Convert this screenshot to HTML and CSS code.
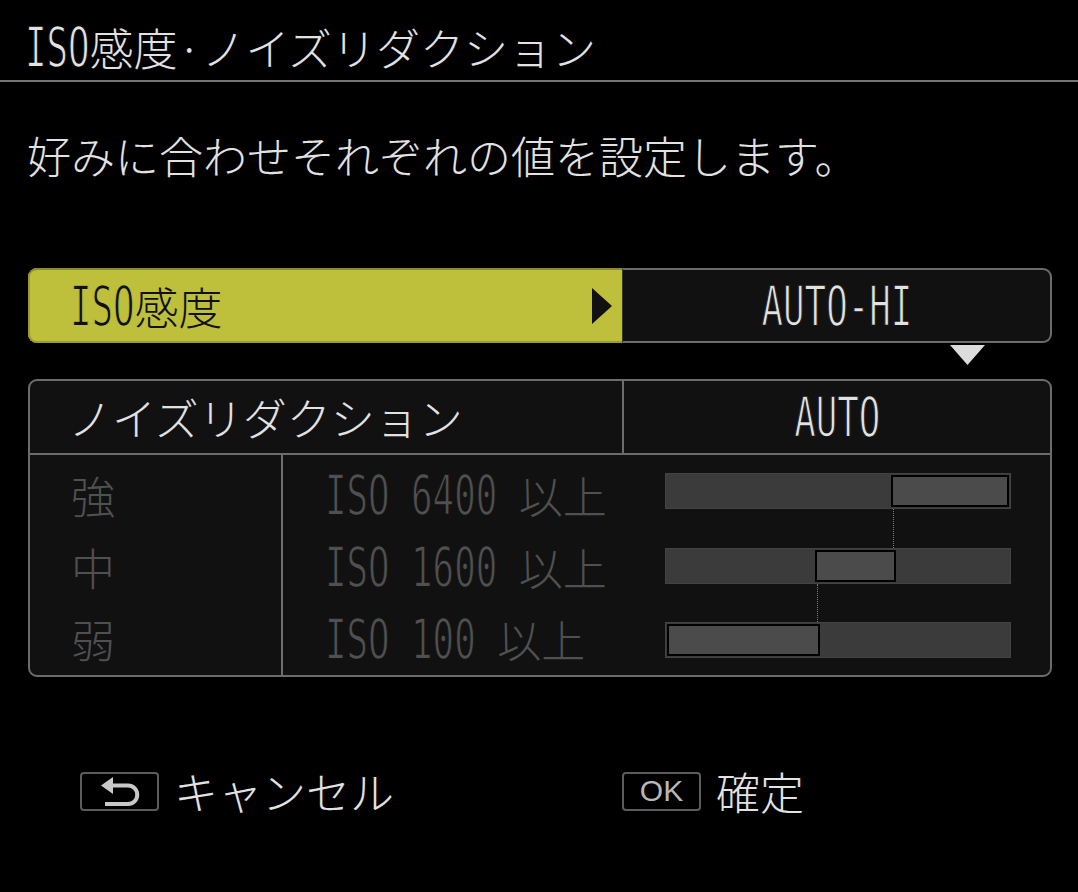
FILE: index.html
```html
<!DOCTYPE html>
<html lang="ja">
<head>
<meta charset="utf-8">
<title>ISO感度・ノイズリダクション</title>
<link rel="stylesheet" href="styles.css">
</head>
<body>
<div class="screen">
  <h1 class="title"><span class="lat n3">ISO</span>感度·ノイズリダクション</h1>
  <hr class="rule">
  <p class="desc">好みに合わせそれぞれの値を設定します。</p>

  <div class="iso-row">
    <div class="iso-label">
      <span class="label-text"><span class="lat n3">ISO</span>感度</span>
      <svg class="right-tri" viewBox="0 0 20 36"><polygon points="0,0 20,18 0,36"/></svg>
    </div>
    <div class="iso-value"><span class="lat mid">AUTO-HI</span></div>
  </div>

  <div class="hint"><svg class="down-tri" viewBox="0 0 35 20"><polygon points="0,0 35,0 17.5,20"/></svg></div>

  <section class="nr">
    <div class="nr-head">
      <div class="nr-label">ノイズリダクション</div>
      <div class="nr-value"><span class="lat mid">AUTO</span></div>
    </div>
    <div class="nr-body">
      <ul class="levels">
        <li>強</li>
        <li>中</li>
        <li>弱</li>
      </ul>
      <ul class="thresholds">
        <li><span class="lat n9">ISO 6400 </span>以上</li>
        <li><span class="lat n9">ISO 1600 </span>以上</li>
        <li><span class="lat n8">ISO 100 </span>以上</li>
      </ul>
      <div class="bars">
        <div class="track"><div class="seg s1"></div></div>
        <div class="conn c1"></div>
        <div class="track"><div class="seg s2"></div></div>
        <div class="conn c2"></div>
        <div class="track"><div class="seg s3"></div></div>
      </div>
    </div>
  </section>

  <footer class="keys">
    <div class="key key-cancel">
      <span class="keycap">
        <svg class="back-icon" viewBox="0 0 40 30">
          <path d="M10 8.5 H28 A9.25 9.25 0 0 1 28 27 H5"/>
          <polygon points="1,8.5 13,0 13,17"/>
        </svg>
      </span>
      <span class="key-text">キャンセル</span>
    </div>
    <div class="key">
      <span class="keycap ok">OK</span>
      <span class="key-text">確定</span>
    </div>
  </footer>
</div>
</body>
</html>
```

FILE: styles.css
```css
* {
  box-sizing: border-box;
  margin: 0;
  padding: 0;
}

html,
body {
  background: #000;
}

body {
  --bg: #000;
  width: 1078px;
  height: 892px;
  overflow: hidden;
  font-family: "Noto Sans CJK JP", sans-serif;
  font-weight: 300;
  color: #e2e2e2;
}

.screen {
  display: flex;
  flex-direction: column;
  height: 892px;
}

/* condensed, thin latin glyphs of the camera font */
.lat {
  display: inline-block;
  font-family: "DejaVu Sans Mono", monospace;
  font-size: 55px;
  font-weight: 400;
  line-height: 0;
  white-space: pre;
  transform: scaleX(0.65);
  transform-origin: 0 50%;
  -webkit-text-stroke: 1.4px var(--bg);
}

.lat.mid {
  transform-origin: 50% 50%;
}

.lat.n3 {
  margin-right: calc(-3 * 0.602em * 0.35);
}

.lat.n8 {
  margin-right: calc(-8 * 0.602em * 0.35);
}

.lat.n9 {
  margin-right: calc(-9 * 0.602em * 0.35);
}

.title {
  height: 80px;
  padding: 25px 0 0 25px;
  font-size: 44px;
  line-height: 44px;
  font-weight: 300;
}

.rule {
  border: 0;
  height: 2px;
  background: #747474;
}

.desc {
  margin-top: 51px;
  padding-left: 27px;
  font-size: 44px;
  line-height: 44px;
}

/* ISO row */
.iso-row {
  margin: 91px 0 0 28px;
  width: 1024px;
  height: 75px;
  display: flex;
  font-size: 44px;
  line-height: 44px;
}

.iso-label {
  --bg: #bec03c;
  width: 594px;
  background: #bec03c;
  border-radius: 9px 0 0 9px;
  color: #111;
  display: flex;
  align-items: center;
  justify-content: space-between;
  padding: 0 10px 0 42px;
  box-shadow: inset 0 2px 0 #8c8d2a, inset 0 -2px 0 #9a9b30, inset 2px 0 0 #9a9b30;
}

.right-tri {
  width: 20px;
  height: 36px;
  fill: #111;
}

.iso-value {
  --bg: #111;
  flex: 1;
  background: #111;
  border: 2px solid #6c6c6c;
  border-left: 1px solid #3a3a3a;
  border-radius: 0 9px 9px 0;
  display: flex;
  align-items: center;
  justify-content: center;
}

.hint {
  height: 36px;
  padding: 2px 0 0 950px;
}

.down-tri {
  display: block;
  width: 35px;
  height: 20px;
  fill: #dcdcdc;
}

/* noise reduction block */
.nr {
  --bg: #111;
  margin-left: 28px;
  width: 1024px;
  height: 298px;
  border: 2px solid #6c6c6c;
  border-radius: 9px;
  background: #111;
  overflow: hidden;
}

.nr-head {
  height: 74px;
  border-bottom: 2px solid #6c6c6c;
  display: flex;
  font-size: 44px;
  line-height: 44px;
}

.nr-label {
  width: 594px;
  border-right: 2px solid #6c6c6c;
  display: flex;
  align-items: center;
  padding-left: 38px;
}

.nr-value {
  flex: 1;
  display: flex;
  align-items: center;
  justify-content: center;
}

.nr-body {
  display: flex;
  height: 220px;
  font-size: 44px;
  color: #505050;
}

.levels,
.thresholds {
  list-style: none;
  padding-top: 4px;
}

.levels {
  width: 253px;
  border-right: 2px solid #6c6c6c;
  padding-left: 41px;
}

.thresholds {
  width: 382px;
  padding-left: 42px;
}

.levels li,
.thresholds li {
  height: 72px;
  line-height: 72px;
}

.bars {
  width: 346px;
  padding-top: 18px;
  display: flex;
  flex-direction: column;
}

.track {
  height: 36px;
  background: #3b3b3b;
  box-shadow: inset 0 0 0 1px #434343;
  display: flex;
  align-items: center;
}

.seg {
  height: 32px;
  background: #4b4b4b;
  border: 2px solid #000;
}

.s1 { margin-left: 226px; width: 118px; }
.s2 { margin-left: 150px; width: 81px; }
.s3 { margin-left: 2px; width: 153px; }

.conn {
  border-left: 1px dotted #7c7c7c;
}

.c1 { height: 39px; margin-left: 228px; }
.c2 { height: 38px; margin-left: 152px; }

/* footer keys */
.keys {
  margin-top: 92px;
  padding-left: 80px;
  display: flex;
}

.key {
  display: flex;
  align-items: center;
  gap: 15px;
  font-size: 44px;
  line-height: 44px;
}

.key-cancel {
  width: 542px;
}

.keycap {
  width: 79px;
  height: 39px;
  border: 2px solid #5c5c5c;
  border-radius: 4px;
  display: flex;
  align-items: center;
  justify-content: center;
}

.back-icon {
  width: 40px;
  height: 30px;
  margin-top: 2px;
}

.back-icon path {
  fill: none;
  stroke: #c8c8c8;
  stroke-width: 4;
}

.back-icon polygon {
  fill: #c8c8c8;
}

.ok {
  font-family: "Liberation Sans", sans-serif;
  font-size: 30px;
  line-height: 1;
  color: #b8b8b8;
}
```
